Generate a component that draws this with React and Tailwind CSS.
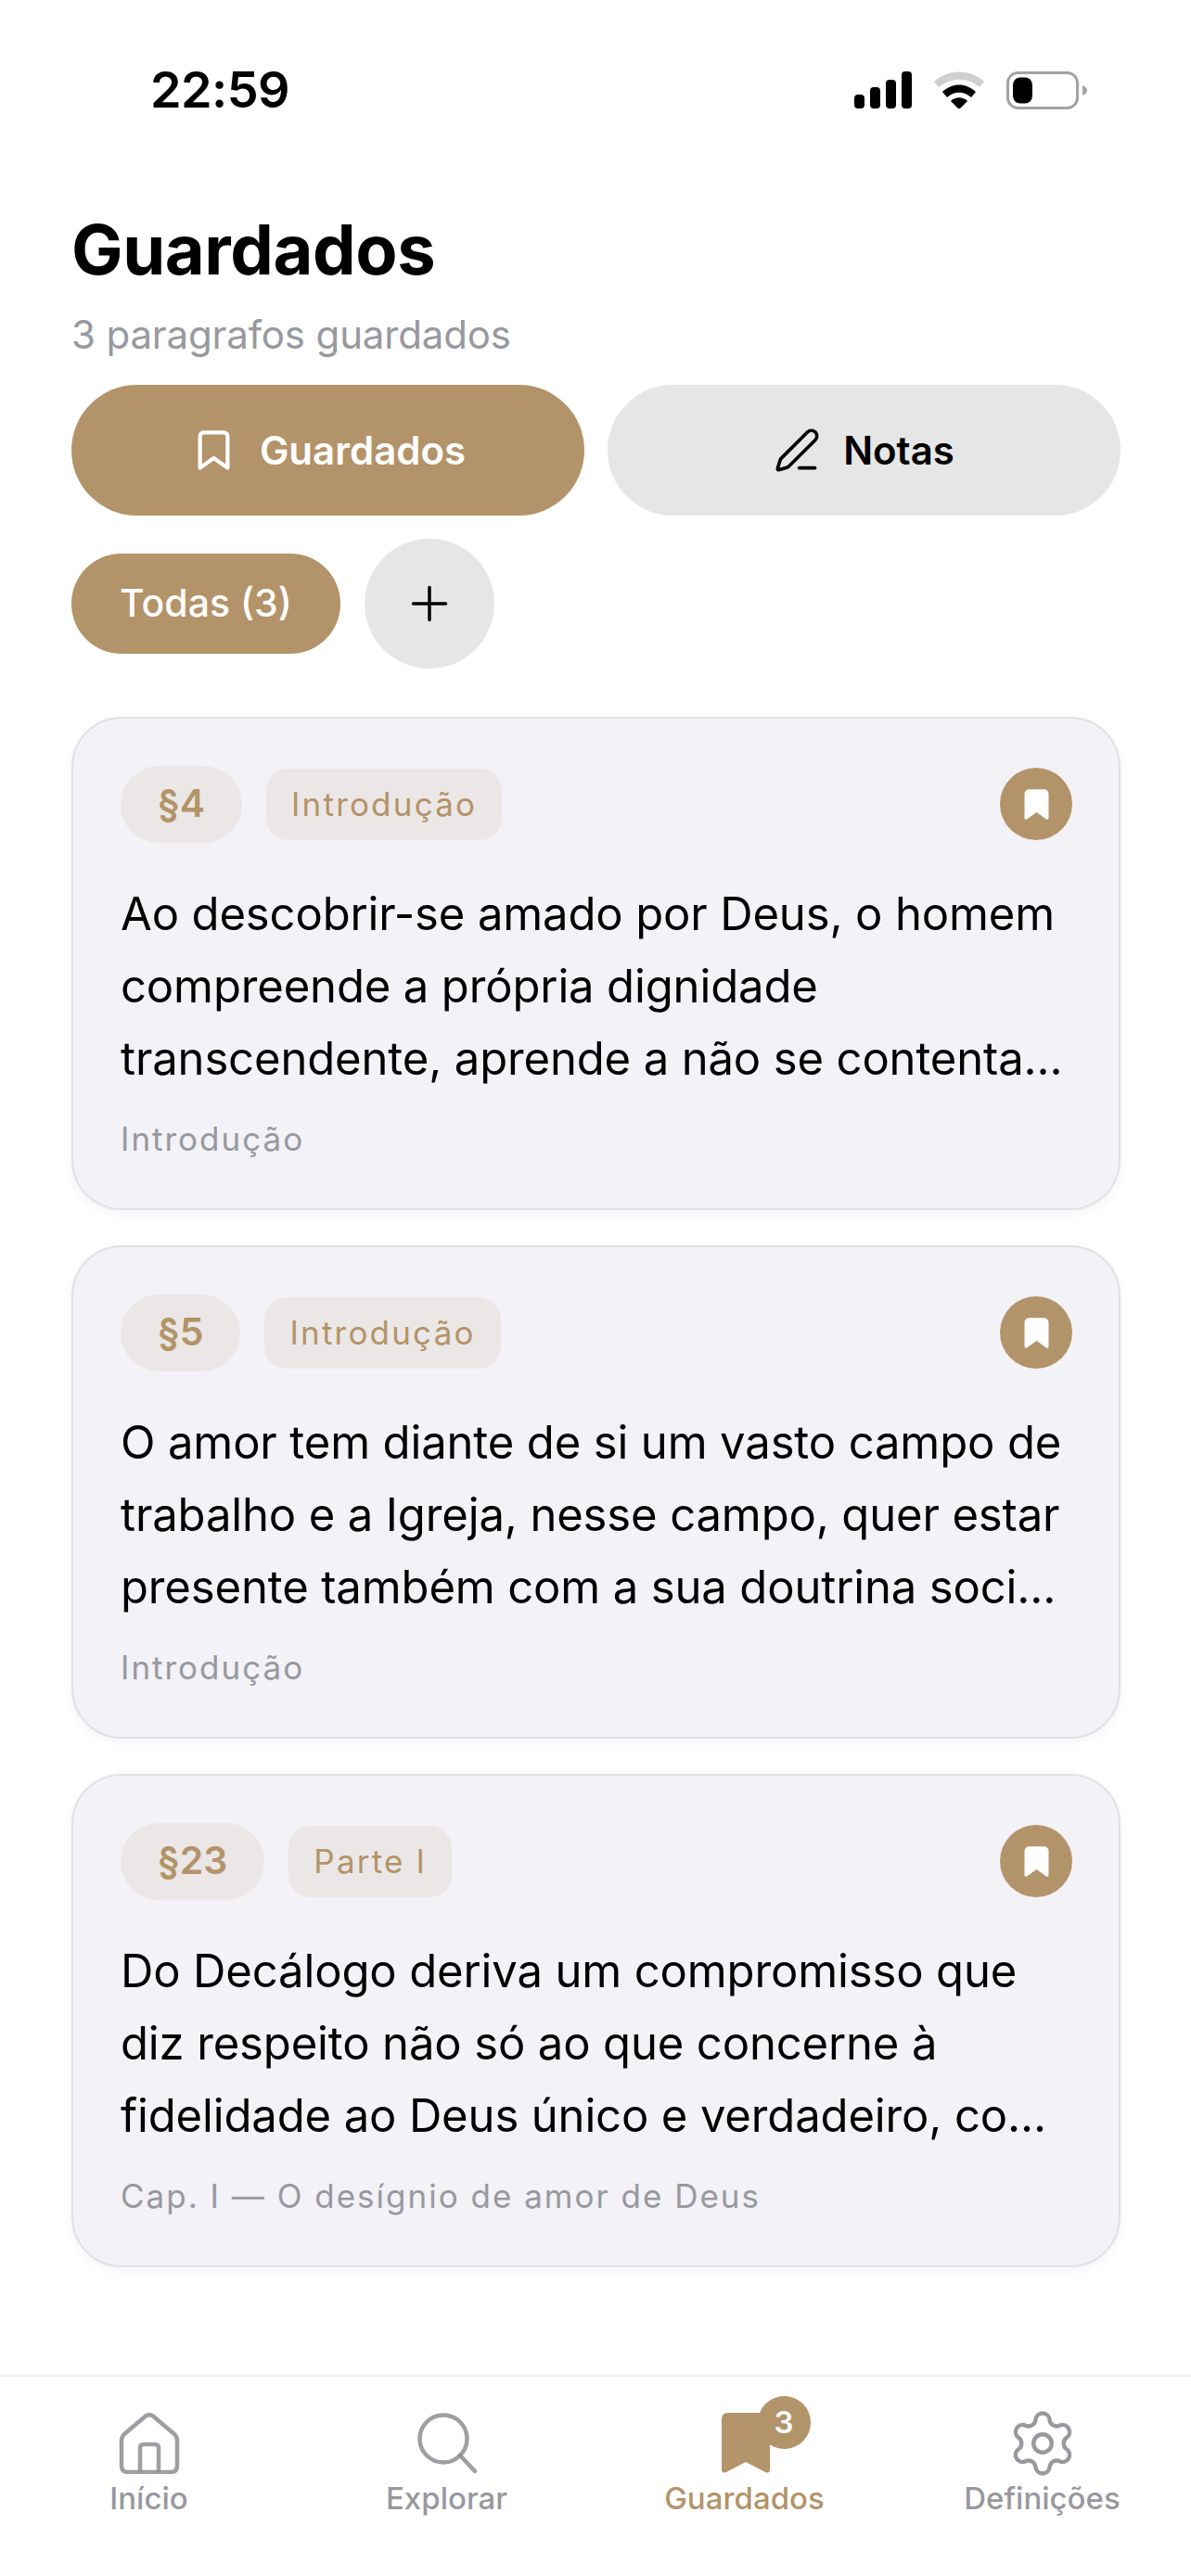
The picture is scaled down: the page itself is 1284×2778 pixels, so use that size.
import React from 'react'

const FONT = { fontFamily: 'Inter, "Liberation Sans", sans-serif' }

const cards = [
  {
    num: '§4',
    tag: 'Introdução',
    lines: ['Ao descobrir-se amado por Deus, o homem', 'compreende a própria dignidade', 'transcendente, aprende a não se contenta...'],
    source: 'Introdução',
  },
  {
    num: '§5',
    tag: 'Introdução',
    lines: ['O amor tem diante de si um vasto campo de', 'trabalho e a Igreja, nesse campo, quer estar', 'presente também com a sua doutrina soci...'],
    source: 'Introdução',
  },
  {
    num: '§23',
    tag: 'Parte I',
    lines: ['Do Decálogo deriva um compromisso que', 'diz respeito não só ao que concerne à', 'fidelidade ao Deus único e verdadeiro, co...'],
    source: 'Cap. I — O desígnio de amor de Deus',
  },
]

function StatusBar() {
  return (
    <div className="flex items-center justify-between h-[171px] pt-[23px] pl-[162px] pr-[112px]">
      <span className="text-[54px] leading-[60px] font-semibold tracking-[-0.6px] text-black">22:59</span>
      <div className="flex items-center gap-[24px]">
        <svg width="62" height="40" viewBox="0 0 62 40">
          <rect x="0" y="25" width="11" height="15" rx="4" fill="#000" />
          <rect x="17" y="17" width="11" height="23" rx="4" fill="#000" />
          <rect x="34" y="9" width="11" height="31" rx="4" fill="#000" />
          <rect x="51" y="0" width="11" height="40" rx="4" fill="#000" />
        </svg>
        <svg width="54" height="40" viewBox="0 0 54 40">
          <path d="M0 11 C15 -3 39 -3 54 11 L49 17 C36 6 18 6 5 17 Z" fill="#cfcfcf" />
          <path d="M9 22 C20 12 34 12 45 22 L40 28 C32 21 22 21 14 28 Z" fill="#000" />
          <path d="M18 32 C23 27 31 27 36 32 L27 41 Z" fill="#000" />
        </svg>
        <svg width="87" height="41" viewBox="0 0 87 41">
          <rect x="1.5" y="1.5" width="75" height="38" rx="11" fill="none" stroke="#a3a3a3" strokeWidth="3" />
          <rect x="7" y="6.500" width="21" height="28" rx="8" fill="#000" />
          <path d="M82 15 C85 16 87 18 87 20.500 C87 23 85 25 82 26 Z" fill="#a3a3a3" />
        </svg>
      </div>
    </div>
  )
}

function BookmarkIcon({ size, filled, color, stroke = 2 }) {
  return (
    <svg width={size} height={size} viewBox="0 0 24 24" fill={filled ? color : 'none'} stroke={color} strokeWidth={stroke} strokeLinejoin="round" strokeLinecap="round">
      <path d="M7 3h10a2 2 0 0 1 2 2v16l-7-5-7 5V5a2 2 0 0 1 2-2z" />
    </svg>
  )
}

function Card({ card }) {
  return (
    <div className="h-[532px] rounded-[54px] border-[2px] border-[#e0e0e6] bg-[#f2f2f7] pl-[51px] pr-[50px] pt-[50px] shadow-[0_3px_12px_rgba(0,0,0,0.05)]">
      <div className="flex items-center h-[84px]">
        <span className="flex items-center h-[83px] px-[40px] rounded-full bg-[#ebe7e6] text-[41px] font-semibold text-[#b39369]">{card.num}</span>
        <span className="flex items-center h-[77px] px-[27px] ml-[26px] rounded-[24px] bg-[#ebe7e6] text-[35px] tracking-[2.2px] text-[#b39369]">{card.tag}</span>
        <div className="ml-auto flex items-center justify-center w-[78px] h-[78px] rounded-full bg-[#b39369]">
          <BookmarkIcon size={39} filled color="#fff" />
        </div>
      </div>
      <div className="mt-[38px] text-[49px] leading-[78px] tracking-[-0.14px] text-black">
        {card.lines.map(l => (
          <div key={l} className="whitespace-nowrap">{l}</div>
        ))}
      </div>
      <div className="mt-[23px] text-[35px] leading-[48px] tracking-[2px] text-[#98989f]">{card.source}</div>
    </div>
  )
}

function NavItem({ label, active, children }) {
  return (
    <div className="flex-1 flex flex-col items-center">
      <div className="flex items-center justify-center h-[72px]">{children}</div>
      <span className={`mt-[2px] text-[33px] leading-[42px] font-medium ${active ? 'text-[#b39369]' : 'text-[#98989f]'}`}>{label}</span>
    </div>
  )
}

export default function App() {
  return (
    <div className="relative w-[1284px] h-[2778px] bg-white flex flex-col overflow-hidden" style={FONT}>
      <StatusBar />

      <div className="pl-[77px] pr-[76px] flex-1">
        <h1 className="mt-[56px] text-[74px] leading-[84px] font-bold tracking-[-0.4px] text-black">Guardados</h1>
        <p className="mt-[23px] text-[42px] leading-[54px] tracking-[-0.15px] text-[#98989f]">3 paragrafos guardados</p>

        {/* Tabs */}
        <div className="mt-[27px] flex gap-[25px]">
          <div className="flex-1 h-[141px] rounded-full bg-[#b39369] flex items-center justify-center gap-[24px] text-white text-[42px] font-semibold">
            <BookmarkIcon size={51} color="#fff" />
            Guardados
          </div>
          <div className="flex-1 h-[141px] rounded-full bg-[#e6e6e6] flex items-center justify-center gap-[24px] text-black text-[42px] font-semibold">
            <svg width="51" height="51" viewBox="0 0 24 24" fill="none" stroke="#000" strokeWidth="1.7" strokeLinecap="round" strokeLinejoin="round">
              <path d="M13 21h8" />
              <path d="M21.174 6.812a1 1 0 0 0-3.986-3.987L3.842 16.174a2 2 0 0 0-.5.83l-1.321 4.352a.5.5 0 0 0 .623.622l4.353-1.32a2 2 0 0 0 .83-.497z" />
            </svg>
            Notas
          </div>
        </div>

        {/* Filters */}
        <div className="mt-[25px] flex items-center gap-[26px]">
          <div className="h-[108px] px-[52px] rounded-full bg-[#b39369] flex items-center text-white text-[41px] font-medium">Todas (3)</div>
          <div className="w-[140px] h-[140px] rounded-full bg-[#e6e6e6] flex items-center justify-center">
            <svg width="42" height="42" viewBox="0 0 24 24" fill="none" stroke="#000" strokeWidth="2" strokeLinecap="round">
              <path d="M12 2v20M2 12h20" />
            </svg>
          </div>
        </div>

        {/* Cards */}
        <div className="mt-[52px] flex flex-col gap-[38px]">
          {cards.map(c => <Card key={c.num} card={c} />)}
        </div>
      </div>

      {/* Tab bar */}
      <div className="h-[217px] border-t-[2px] border-[#efeff1] flex pt-[36px]">
        <NavItem label="Início">
          <svg width="66" height="66" viewBox="0 0 66 66" fill="none" stroke="#8e8e93" strokeOpacity="0.85" strokeWidth="4.5" strokeLinejoin="round">
            <path d="M6 23 Q3 26 3 30 V57 Q3 64 10 64 H56 Q63 64 63 57 V30 Q63 26 60 23 L37 3.500 Q33 1 29 3.500 Z" />
            <path d="M23 64 V38 Q23 34 27 34 H39 Q43 34 43 38 V64" />
          </svg>
        </NavItem>
        <NavItem label="Explorar">
          <svg width="66" height="66" viewBox="0 0 66 66" fill="none" stroke="#8e8e93" strokeOpacity="0.85" strokeWidth="4.5" strokeLinecap="round">
            <circle cx="29" cy="28" r="25.500" />
            <path d="M47 46 L63 63" />
          </svg>
        </NavItem>
        <NavItem label="Guardados" active>
          <div className="relative w-[52px] h-[66px] ml-[2px]">
            <svg width="52" height="66" viewBox="0 0 52 66">
              <path d="M7 0 H52 V61 Q52 66 47 64 L26 53 L5 64 Q0 66 0 61 V7 Q0 0 7 0Z" fill="#b39369" />
            </svg>
            <div className="absolute -top-[18px] -right-[44px] w-[57px] h-[57px] rounded-full bg-[#b39369] flex items-center justify-center text-white text-[33px] font-semibold">3</div>
          </div>
        </NavItem>
        <NavItem label="Definições">
          <svg width="78" height="78" viewBox="0 0 24 24" fill="none" stroke="#98989f" strokeWidth="1.35" strokeLinecap="round" strokeLinejoin="round">
            <path d="M9.671 4.136a2.34 2.34 0 0 1 4.659 0 2.34 2.34 0 0 0 3.319 1.915 2.34 2.34 0 0 1 2.33 4.033 2.34 2.34 0 0 0 0 3.831 2.34 2.34 0 0 1-2.33 4.033 2.34 2.34 0 0 0-3.319 1.915 2.34 2.34 0 0 1-4.659 0 2.34 2.34 0 0 0-3.32-1.915 2.34 2.34 0 0 1-2.33-4.033 2.34 2.34 0 0 0 0-3.831A2.34 2.34 0 0 1 6.35 6.051a2.34 2.34 0 0 0 3.319-1.915" />
            <circle cx="12" cy="12" r="3" />
          </svg>
        </NavItem>
      </div>
    </div>
  )
}
